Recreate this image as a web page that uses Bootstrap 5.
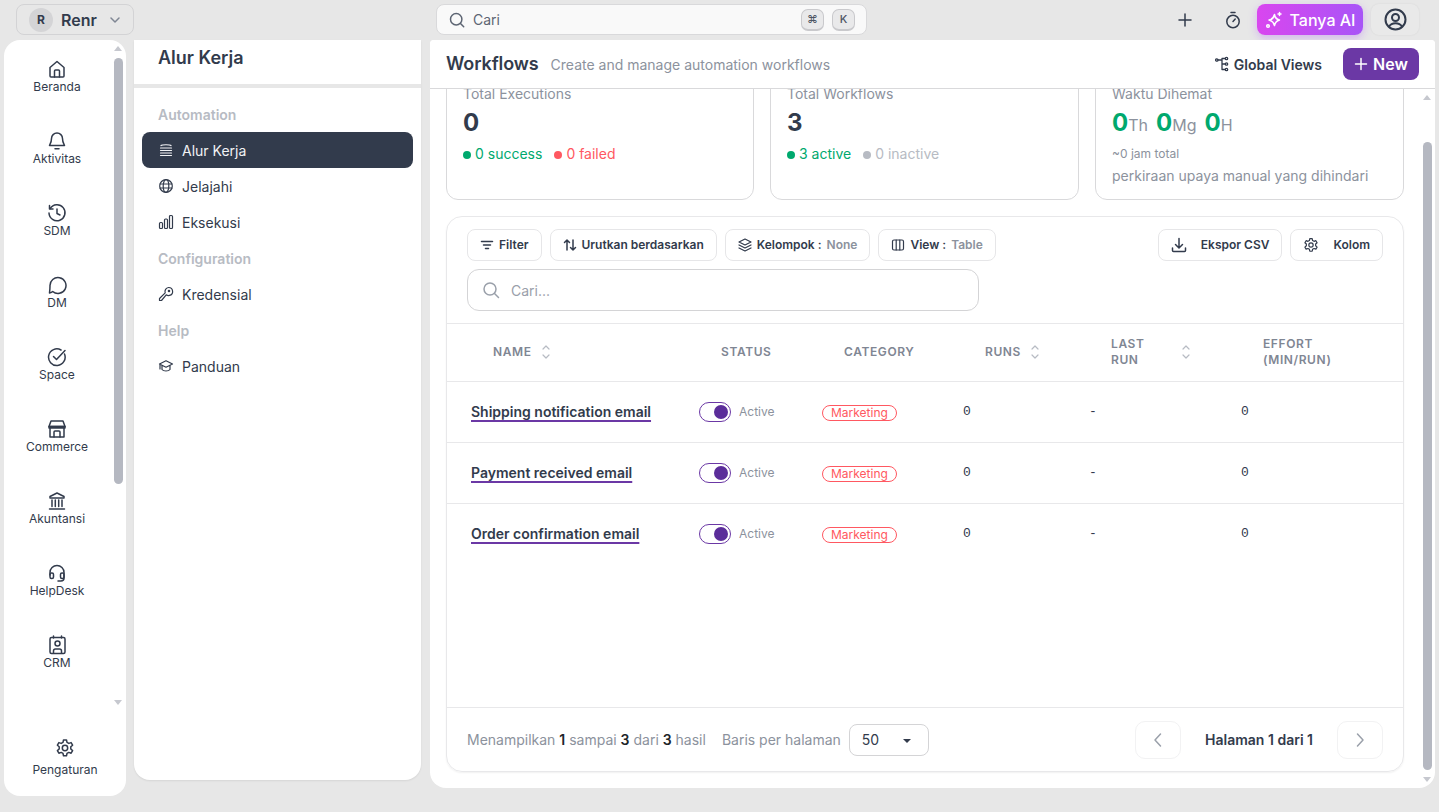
<!DOCTYPE html>
<html lang="id">
<head>
  <meta charset="UTF-8">
  <meta name="viewport" content="width=device-width, initial-scale=1">
  <title>Workflows</title>
  <link href="https://cdn.jsdelivr.net/npm/bootstrap@5.3.2/dist/css/bootstrap.min.css" rel="stylesheet">
  <style>
    body { background: #e7e7e7; color: #323b4c; font-family: Inter, "Liberation Sans", sans-serif; font-size: 14px; height: 812px; overflow: hidden; }
    svg { display: block; flex: none; fill: none; stroke: currentColor; stroke-width: 1.5; stroke-linecap: round; stroke-linejoin: round; }

    /* top bar */
    .topbar { height: 40px; padding: 4px 20px 5px 16px; }
    .org-btn { width: 118px; height: 31px; border: 1px solid #d3d3d5; border-radius: 8px; padding: 0 12px; gap: 8px; font-size: 16px; font-weight: 600; }
    .org-avatar { width: 24px; height: 24px; border-radius: 50%; background: #d4d4d6; font-size: 12px; font-weight: 700; }
    .top-search { width: 431px; height: 31px; margin-left: 302px; background: #f9f9f9; border: 1px solid #d9d9db; border-radius: 8px; padding: 0 11px 0 12px; color: #5d6573; }
    .kbd-key { width: 23px; height: 22px; border: 1px solid #c9c9cc; border-bottom-width: 2px; border-radius: 7px; background: #e9e9ea; font-size: 11px; font-weight: 500; margin-left: 8px; color: #4d5564; }
    .ask-ai { width: 106px; height: 31px; border: 0; border-radius: 8px; color: #fff; font-weight: 500; gap: 7px; background: linear-gradient(90deg, #d946ef, #a855f7); box-shadow: 0 3px 8px rgba(168, 85, 247, .35); }
    .profile-box { width: 48px; height: 31px; margin-left: 8px; border-radius: 8px; background: #e9e9e9; box-shadow: 0 0 2px rgba(0, 0, 0, .08); }

    /* panels */
    .shell { padding-left: 4px; gap: 8px; }
    .rail { width: 122px; height: 756px; background: #fff; border-radius: 16px; padding-top: 12px; position: relative; }
    .rail-item { width: 106px; height: 72px; padding-top: 7px; font-size: 12px; line-height: 16px; color: #323b4c; }
    .rail-foot { width: 122px; position: absolute; bottom: 18px; left: 0; font-size: 12px; line-height: 16px; }
    .sub-panel { width: 287px; height: 740px; background: #fff; border-radius: 0 0 16px 16px; box-shadow: 0 1px 2px rgba(0, 0, 0, .08); }
    .sub-title { height: 48px; padding: 5px 24px 0; margin: 0; font-size: 18px; font-weight: 600; line-height: 26px; border-bottom: 4px solid #e7e7e7; box-sizing: content-box; height: 39px; }
    .sub-nav { padding: 8px 8px 0; }
    .sub-head { height: 36px; padding-left: 16px; font-weight: 600; color: #b7bbc3; }
    .sub-link { height: 36px; padding-left: 16px; gap: 8px; border-radius: 8px; color: #323b4c; text-decoration: none; }
    .sub-link.is-on { background: #323b4c; color: #f1f2f4; }
    .main-panel { width: 1005px; height: 748px; margin-left: 1px; background: #fff; border-radius: 4px 4px 16px 16px; position: relative; overflow: hidden; }
    .main-head { height: 49px; padding: 0 16px; border-bottom: 1px solid #d9d9db; background: #fff; position: relative; z-index: 2; }
    .main-title { font-size: 18px; font-weight: 600; margin: 0 12px 0 0; letter-spacing: -.1px; }
    .muted-text { color: #8c929d; }
    .views-btn { font-weight: 600; gap: 5px; margin-right: 21px; }
    .new-btn { width: 76px; height: 32px; background: #6b38a5; color: #fff; border: 0; border-radius: 8px; font-weight: 600; gap: 5px; padding: 0; }

    /* content */
    .content-area { padding: 0 31px 0 16px; }
    .stat-row { display: grid; grid-template-columns: 308px 309px 309px; gap: 16px; margin-top: -22px; }
    .stat-box { height: 133px; padding: 16px; border: 1px solid #d9d9db; border-radius: 12px; background: #fff; }
    .stat-label { line-height: 20px; color: #8c929d; }
    .stat-num { font-size: 24px; font-weight: 700; line-height: 32px; margin-top: 3px; }
    .stat-unit { font-size: 16px; font-weight: 400; color: #8c929d; margin-right: 8px; }
    .stat-line { line-height: 20px; margin-top: 5px; gap: 12px; }
    .dot-mark { width: 8px; height: 8px; border-radius: 50%; display: inline-block; margin-right: 4px; }
    .c-green { color: #00a96e; } .c-red { color: #ff5861; } .c-gray { color: #b7bbc3; }
    .bg-ok { background: #00a96e; } .bg-bad { background: #ff5861; } .bg-off { background: #b7bbc3; }
    .tiny-line { font-size: 12px; line-height: 16px; color: #8c929d; margin-top: 5px; }
    .stat-foot { line-height: 20px; color: #8c929d; margin-top: 4px; }

    .table-box { height: 556px; margin-top: 16px; border: 1px solid #e8e8ea; border-radius: 16px; box-shadow: 0 1px 2px rgba(0, 0, 0, .06); }
    .tool-zone { padding: 12px 20px 12px 20px; border-bottom: 1px solid #e8e8ea; height: 107px; }
    .tool-btn { height: 32px; border: 1px solid #e6e6e8; border-radius: 8px; background: #fff; color: #323b4c; font-size: 12px; font-weight: 600; padding: 0 12px; gap: 5px; white-space: nowrap; }
    .tool-btn span { color: #8c929d; }
    .table-search { width: 512px; height: 42px; margin-top: 8px; border: 1px solid #d4d4d6; border-radius: 12px; padding: 0 14px; gap: 11px; color: #9aa0aa; }
    .flow-table { table-layout: fixed; width: 956px; margin: 0; --bs-table-color: #323b4c; }
    .flow-table th { height: 57px; padding: 0 0 0 46px; font-size: 12px; font-weight: 600; line-height: 16px; letter-spacing: .6px; text-transform: uppercase; color: #7f8693; border-bottom: 1px solid #e8e8ea; vertical-align: middle; }
    .flow-table td { height: 61px; padding: 0 0 0 24px; border-bottom: 1px solid #e8e8ea; vertical-align: middle; }
    .flow-table tr:last-child td { border-bottom: 0; }
    .sort-mark { color: #b7bbc3; stroke-width: 1.2; }
    .flow-name { font-weight: 600; color: #323b4c; text-decoration: underline; text-decoration-color: #6b38a5; text-decoration-thickness: 2px; text-underline-offset: 3px; }
    .flow-toggle { width: 32px; height: 20px; border: 1px solid #6b38a5; border-radius: 10px; padding: 2px; }
    .flow-toggle i { width: 14px; height: 14px; border-radius: 50%; background: #5b2d9a; display: block; }
    .toggle-text { font-size: 12px; color: #8c929d; margin-left: 8px; }
    .tag-pill { border: 1px solid #ff5861; color: #ff5861; border-radius: 8px; font-size: 12px; line-height: 14px; padding: 0 8px; display: inline-block; }
    .mono-cell { font-family: "Liberation Mono", monospace; font-size: 13px; }
    .table-foot { height: 64px; margin-top: auto; padding: 0 20px; border-top: 1px solid #e8e8ea; }
    .page-select { width: 80px; height: 32px; border: 1px solid #d4d4d6; border-radius: 8px; padding: 0 20px 0 12px; margin-left: 8px; position: relative; line-height: 30px; color: #323b4c; }
    .page-select::after { content: ""; position: absolute; right: 17px; top: 14px; border: 4px solid transparent; border-top: 4px solid #323b4c; }
    .page-btn { width: 46px; height: 38px; border: 1px solid #f2f2f3; border-radius: 10px; color: #9aa0aa; }

    /* scrollbars drawn over the panels */
    .fake-track { position: absolute; width: 9px; top: 0; bottom: 0; }
    .fake-thumb { position: absolute; left: 0; right: 0; background: #b5b8c1; border-radius: 5px; }
    .fake-up, .fake-down { position: absolute; left: 0; border: 4.5px solid transparent; }
    .fake-up { border-bottom: 5px solid #c6c8cf; border-top: 0; }
    .fake-down { border-top: 5px solid #c6c8cf; border-bottom: 0; }
  </style>
</head>
<body>

<!-- TOP BAR -->
<div class="topbar d-flex align-items-center">
  <div class="org-btn d-flex align-items-center">
    <span class="org-avatar d-flex align-items-center justify-content-center">R</span>
    <span>Renr</span>
    <svg class="ms-1" width="12" height="12" viewBox="0 0 12 12" style="color:#7f8693"><path d="M2 4l4 4 4-4"/></svg>
  </div>
  <div class="top-search d-flex align-items-center">
    <svg width="16" height="16" viewBox="0 0 16 16"><circle cx="7.2" cy="7.2" r="5.7"/><path d="M11.5 11.5l3.2 3.2"/></svg>
    <span class="ms-2 me-auto">Cari</span>
    <span class="kbd-key d-flex align-items-center justify-content-center">⌘</span>
    <span class="kbd-key d-flex align-items-center justify-content-center">K</span>
  </div>
  <div class="ms-auto d-flex align-items-center">
    <svg class="me-4" width="16" height="16" viewBox="0 0 16 16"><path d="M8 2v12M2 8h12"/></svg>
    <svg class="ms-2 me-3" width="16" height="18" viewBox="0 0 16 18"><circle cx="8" cy="10.5" r="6.2"/><path d="M6 1.5h4M8 10.5l2.2-2.4"/></svg>
    <button class="ask-ai btn d-flex align-items-center justify-content-center p-0">
      <svg width="18" height="18" viewBox="0 0 18 18"><path d="M9.5 3.5c.6 3.5 2 5 5 5.500-3 .8-4.400 2.200-5 5.500-.8-3.300-2.200-4.700-5.500-5.500 3.300-.5 4.700-2 5.500-5.500z"/><path d="M14.500 1.500v3M13 3h3"/><circle cx="3" cy="15" r="1.300"/></svg>
      Tanya AI
    </button>
    <div class="profile-box d-flex align-items-center justify-content-center">
      <svg width="23" height="23" viewBox="0 0 23 23" style="stroke-width:2"><circle cx="11.500" cy="11.500" r="10"/><circle cx="11.500" cy="9.500" r="3.500"/><path d="M5 18.500c1.500-2.500 3.500-3.300 6.500-3.300s5 .8 6.500 3.300"/></svg>
    </div>
  </div>
</div>

<div class="shell d-flex align-items-start">

  <!-- RAIL -->
  <nav class="rail">
    <div class="rail-item d-flex flex-column align-items-center">
      <svg width="20" height="20" viewBox="0 0 20 20"><path d="M3 8.500L10 2.500l7 6V17a1 1 0 0 1-1 1H4a1 1 0 0 1-1-1z"/><path d="M7.500 18v-6a1 1 0 0 1 1-1h3a1 1 0 0 1 1 1v6"/></svg>
      Beranda
    </div>
    <div class="rail-item d-flex flex-column align-items-center">
      <svg width="20" height="20" viewBox="0 0 20 20"><path d="M10 2a5.500 5.500 0 0 0-5.500 5.500c0 4.500-2 6-2 7h15c0-1-2-2.500-2-7A5.500 5.500 0 0 0 10 2z"/><path d="M8 17.800h4"/></svg>
      Aktivitas
    </div>
    <div class="rail-item d-flex flex-column align-items-center">
      <svg width="20" height="20" viewBox="0 0 20 20"><path d="M3.200 5.500A8 8 0 1 1 2 10"/><path d="M2.500 2.500v3.500H6M10 6v4.500l3 1.500"/></svg>
      SDM
    </div>
    <div class="rail-item d-flex flex-column align-items-center">
      <svg width="20" height="20" viewBox="0 0 20 20"><path d="M2.500 18c1.500-.3 2.500-.8 3.200-1.500A8 8 0 1 0 3 11c0 1.800-.2 4.500-.5 7z"/></svg>
      DM
    </div>
    <div class="rail-item d-flex flex-column align-items-center">
      <svg width="20" height="20" viewBox="0 0 20 20"><path d="M17.500 7A8.300 8.300 0 1 1 14 3"/><path d="M6.500 9.500l3 3L18 3.500"/></svg>
      Space
    </div>
    <div class="rail-item d-flex flex-column align-items-center">
      <svg width="20" height="20" viewBox="0 0 20 20"><path d="M4 2h12l2 5.500H2zM3 7.500V18h14V7.500"/><path d="M2 7.500h16v1.500H2zM7 18v-5a1 1 0 0 1 1-1h4a1 1 0 0 1 1 1v5"/></svg>
      Commerce
    </div>
    <div class="rail-item d-flex flex-column align-items-center">
      <svg width="20" height="20" viewBox="0 0 20 20"><path d="M10 2l7 3.500v1.500H3V5.500zM5 9v6.500M8.300 9v6.500M11.700 9v6.500M15 9v6.500M2.500 18h15"/></svg>
      Akuntansi
    </div>
    <div class="rail-item d-flex flex-column align-items-center">
      <svg width="20" height="20" viewBox="0 0 20 20"><path d="M3 12V9.500a7 7 0 0 1 14 0V15a3 3 0 0 1-3 3h-3"/><rect x="3" y="10" width="3.500" height="5.500" rx="1.500"/><rect x="13.500" y="10" width="3.500" height="5.500" rx="1.500"/></svg>
      HelpDesk
    </div>
    <div class="rail-item d-flex flex-column align-items-center">
      <svg width="20" height="20" viewBox="0 0 20 20"><rect x="3" y="2.500" width="15" height="16" rx="1.500"/><circle cx="10.500" cy="8.500" r="2.500"/><path d="M6.500 18v-2a2 2 0 0 1 2-2h4a2 2 0 0 1 2 2v2M6.500 1v2M14.500 1v2"/></svg>
      CRM
    </div>
    <div class="rail-foot d-flex flex-column align-items-center">
      <svg class="gear-icon" width="20" height="20" viewBox="0 0 20 20"><circle cx="10" cy="10" r="2.700"/><path d="M8.500 2h3l.5 2.400 1.800 1 2.300-.8 1.500 2.600-1.800 1.600v2.200l1.800 1.600-1.500 2.600-2.300-.8-1.800 1-.5 2.400h-3l-.5-2.400-1.800-1-2.300.8-1.500-2.600 1.800-1.600V8.800L2.400 7.200l1.500-2.600 2.300.8 1.800-1z"/></svg>
      <span class="mt-1">Pengaturan</span>
    </div>
    <div class="fake-track" style="left:110px">
      <div class="fake-up" style="top:6px"></div>
      <div class="fake-thumb" style="top:18px;height:426px"></div>
      <div class="fake-down" style="top:660px"></div>
    </div>
  </nav>

  <!-- SUB NAV -->
  <aside class="sub-panel">
    <h2 class="sub-title">Alur Kerja</h2>
    <div class="sub-nav d-flex flex-column">
      <div class="sub-head d-flex align-items-center">Automation</div>
      <a class="sub-link is-on d-flex align-items-center" href="#">
        <svg width="16" height="16" viewBox="0 0 16 16" style="stroke-width:1.200"><path d="M3 3.500c1-1 9-1 10 0M2.500 6h11M2.500 8.500h11M2.500 11h11M2.500 13.500h11"/></svg>
        Alur Kerja
      </a>
      <a class="sub-link d-flex align-items-center" href="#">
        <svg width="16" height="16" viewBox="0 0 16 16" style="stroke-width:1.200"><circle cx="8" cy="8" r="6.300"/><ellipse cx="8" cy="8" rx="2.800" ry="6.300"/><path d="M2 6h12M2 10h12"/></svg>
        Jelajahi
      </a>
      <a class="sub-link d-flex align-items-center" href="#">
        <svg width="16" height="16" viewBox="0 0 16 16" style="stroke-width:1.200"><rect x="1.500" y="8.500" width="3" height="6" rx="1"/><rect x="6.500" y="5" width="3" height="9.500" rx="1"/><rect x="11.500" y="1.500" width="3" height="13" rx="1"/></svg>
        Eksekusi
      </a>
      <div class="sub-head d-flex align-items-center">Configuration</div>
      <a class="sub-link d-flex align-items-center" href="#">
        <svg width="16" height="16" viewBox="0 0 16 16" style="stroke-width:1.200"><path d="M10.500 1.500a4 4 0 0 1 1 7.900 4 4 0 0 1-3.300-.6L3.500 14.500h-2v-2l5.700-5.700a4 4 0 0 1 3.300-5.300z"/><circle cx="11" cy="5" r=".7"/></svg>
        Kredensial
      </a>
      <div class="sub-head d-flex align-items-center">Help</div>
      <a class="sub-link d-flex align-items-center" href="#">
        <svg width="16" height="16" viewBox="0 0 16 16" style="stroke-width:1.200"><path d="M8 2.800L1.500 6 8 9.200 14.500 6zM4 7.500v4C5.500 13.500 10.500 13.500 12 11.500v-4M2 6v5"/></svg>
        Panduan
      </a>
    </div>
  </aside>

  <!-- MAIN -->
  <main class="main-panel">
    <header class="main-head d-flex align-items-center">
      <h1 class="main-title">Workflows</h1>
      <span class="muted-text">Create and manage automation workflows</span>
      <div class="views-btn ms-auto d-flex align-items-center">
        <svg width="14" height="16" viewBox="0 0 14 16" style="stroke-width:1.300"><circle cx="1.800" cy="4" r="1.200"/><circle cx="11.500" cy="2.500" r="1.200"/><circle cx="11.500" cy="8" r="1.200"/><circle cx="11.500" cy="13.500" r="1.200"/><path d="M3 4h4M10.300 2.500H7v11h3.300M7 8h3.300"/></svg>
        Global Views
      </div>
      <button class="new-btn btn d-flex align-items-center justify-content-center">
        <svg width="14" height="14" viewBox="0 0 14 14"><path d="M7 1.500v11M1.500 7h11"/></svg>
        New
      </button>
    </header>

    <div class="content-area">
      <section class="stat-row">
        <div class="stat-box">
          <div class="stat-label">Total Executions</div>
          <div class="stat-num">0</div>
          <div class="stat-line d-flex">
            <span class="c-green"><i class="dot-mark bg-ok"></i>0 success</span>
            <span class="c-red"><i class="dot-mark bg-bad"></i>0 failed</span>
          </div>
        </div>
        <div class="stat-box">
          <div class="stat-label">Total Workflows</div>
          <div class="stat-num">3</div>
          <div class="stat-line d-flex">
            <span class="c-green"><i class="dot-mark bg-ok"></i>3 active</span>
            <span class="c-gray"><i class="dot-mark bg-off"></i>0 inactive</span>
          </div>
        </div>
        <div class="stat-box">
          <div class="stat-label">Waktu Dihemat</div>
          <div class="stat-num c-green">0<span class="stat-unit">Th</span>0<span class="stat-unit">Mg</span>0<span class="stat-unit">H</span></div>
          <div class="tiny-line">~0 jam total</div>
          <div class="stat-foot">perkiraan upaya manual yang dihindari</div>
        </div>
      </section>

      <section class="table-box d-flex flex-column">
        <div class="tool-zone">
          <div class="d-flex gap-2">
            <button class="tool-btn btn d-flex align-items-center">
              <svg width="14" height="14" viewBox="0 0 14 14"><path d="M1.500 3.500h11M3.500 7h7M5.500 10.500h3"/></svg>Filter
            </button>
            <button class="tool-btn btn d-flex align-items-center">
              <svg width="14" height="14" viewBox="0 0 14 14"><path d="M4 12V2M1.500 4.500L4 2l2.500 2.500M10 2v10M7.500 9.500L10 12l2.500-2.500"/></svg>Urutkan berdasarkan
            </button>
            <button class="tool-btn btn d-flex align-items-center">
              <svg width="14" height="14" viewBox="0 0 14 14" style="stroke-width:1.200"><path d="M7 1L1 4l6 3 6-3zM1 7l6 3 6-3M1 10l6 3 6-3"/></svg>Kelompok : <span>None</span>
            </button>
            <button class="tool-btn btn d-flex align-items-center">
              <svg width="14" height="14" viewBox="0 0 14 14" style="stroke-width:1.200"><rect x="1.500" y="2" width="11" height="10" rx="1.500"/><path d="M5.200 2v10M8.800 2v10"/></svg>View : <span>Table</span>
            </button>
            <button class="tool-btn btn d-flex align-items-center ms-auto" style="gap:14px">
              <svg width="16" height="16" viewBox="0 0 16 16"><path d="M8 1.500v9M4.500 7.500L8 11l3.500-3.500M1.500 11v2.500a1 1 0 0 0 1 1h11a1 1 0 0 0 1-1V11"/></svg>Ekspor CSV
            </button>
            <button class="tool-btn btn d-flex align-items-center" style="gap:14px">
              <svg width="16" height="16" viewBox="0 0 20 20"><circle cx="10" cy="10" r="2.700"/><path d="M8.500 2h3l.5 2.400 1.800 1 2.300-.8 1.500 2.600-1.800 1.600v2.200l1.800 1.600-1.500 2.600-2.300-.8-1.800 1-.5 2.400h-3l-.5-2.400-1.800-1-2.300.8-1.500-2.600 1.800-1.600V8.800L2.400 7.200l1.500-2.600 2.300.8 1.800-1z"/></svg>Kolom
            </button>
          </div>
          <div class="table-search d-flex align-items-center">
            <svg width="18" height="18" viewBox="0 0 18 18"><circle cx="8" cy="8" r="6"/><path d="M12.500 12.500l4 4"/></svg>
            Cari...
          </div>
        </div>

        <table class="flow-table table">
          <colgroup><col style="width:228px"><col style="width:123px"><col style="width:141px"><col style="width:126px"><col style="width:152px"><col style="width:186px"></colgroup>
          <thead>
            <tr>
              <th><div class="d-flex align-items-center gap-2">Name <svg class="sort-mark" width="12" height="18" viewBox="0 0 12 18"><path d="M3 6l3-3 3 3M3 12l3 3 3-3"/></svg></div></th>
              <th>Status</th>
              <th>Category</th>
              <th><div class="d-flex align-items-center gap-2">Runs <svg class="sort-mark" width="12" height="18" viewBox="0 0 12 18"><path d="M3 6l3-3 3 3M3 12l3 3 3-3"/></svg></div></th>
              <th><div class="d-flex align-items-center" style="padding-right:25px;justify-content:space-between">Last<br>Run <svg class="sort-mark" width="12" height="18" viewBox="0 0 12 18"><path d="M3 6l3-3 3 3M3 12l3 3 3-3"/></svg></div></th>
              <th>Effort<br>(Min/Run)</th>
            </tr>
          </thead>
          <tbody id="flowRows"></tbody>
        </table>

        <div class="table-foot d-flex align-items-center">
          <span class="muted-text">Menampilkan <b class="fw-semibold text-dark">1</b> sampai <b class="fw-semibold text-dark">3</b> dari <b class="fw-semibold text-dark">3</b> hasil</span>
          <span class="muted-text ms-3">Baris per halaman</span>
          <div class="page-select">50</div>
          <div class="page-btn ms-auto d-flex align-items-center justify-content-center">
            <svg width="16" height="16" viewBox="0 0 16 16"><path d="M10.500 2L5 8l5.500 6"/></svg>
          </div>
          <span class="fw-semibold mx-4">Halaman 1 dari 1</span>
          <div class="page-btn d-flex align-items-center justify-content-center">
            <svg width="16" height="16" viewBox="0 0 16 16"><path d="M5.500 2L11 8l-5.500 6"/></svg>
          </div>
        </div>
      </section>
    </div>

    <div class="fake-track" style="left:993px">
      <div class="fake-up" style="top:55px"></div>
      <div class="fake-thumb" style="top:102px;height:628px"></div>
      <div class="fake-down" style="top:737px"></div>
    </div>
  </main>
</div>

<script>
  const flows = ['Shipping notification email', 'Payment received email', 'Order confirmation email'];
  document.getElementById('flowRows').innerHTML = flows.map(name => `
    <tr>
      <td><a class="flow-name" href="#">${name}</a></td>
      <td><div class="d-flex align-items-center"><span class="flow-toggle d-flex justify-content-end"><i></i></span><span class="toggle-text">Active</span></div></td>
      <td><span class="tag-pill">Marketing</span></td>
      <td class="mono-cell">0</td>
      <td class="mono-cell">-</td>
      <td class="mono-cell">0</td>
    </tr>`).join('');
</script>
<script src="https://cdn.jsdelivr.net/npm/bootstrap@5.3.2/dist/js/bootstrap.bundle.min.js"></script>
</body>
</html>
